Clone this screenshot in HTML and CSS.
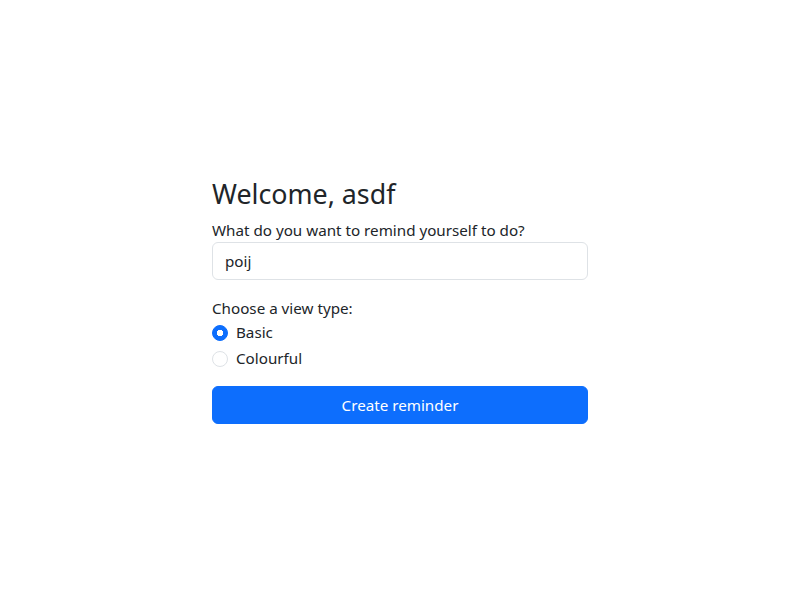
FILE: index.html
```html
<!DOCTYPE html>
<html lang="en">
<head>
<meta charset="utf-8">
<title>Reminder</title>
<link rel="stylesheet" href="styles.css">
</head>
<body>
<main class="page">
  <form class="card-form">
    <h3 class="title">Welcome, asdf</h3>
    <label class="label" for="task">What do you want to remind yourself to do?</label>
    <input class="control" id="task" type="text" value="poij">
    <div class="group">
      <div class="label">Choose a view type:</div>
      <div class="check">
        <input class="radio" type="radio" name="view" id="basic" checked>
        <label for="basic">Basic</label>
      </div>
      <div class="check">
        <input class="radio" type="radio" name="view" id="colourful">
        <label for="colourful">Colourful</label>
      </div>
    </div>
    <button class="btn" type="button">Create reminder</button>
  </form>
</main>
</body>
</html>
```
FILE: styles.css
```css
* { box-sizing: border-box; }
html, body { margin: 0; height: 100%; }
body {
  font-family: "Noto Sans", "Open Sans", sans-serif;
  font-size: 15.2px;
  line-height: 24px;
  color: #212529;
  background: #fff;
}
.page {
  height: 100%;
  display: flex;
  align-items: center;
  justify-content: center;
}
.card-form {
  width: 376px;
  display: flex;
  flex-direction: column;
}
.title {
  margin: 0 0 6px;
  font-size: 26.8px;
  font-weight: 400;
  line-height: 36px;
}
.label { display: block; }
.control {
  display: block;
  width: 100%;
  height: 38px;
  padding: 6px 12px;
  font: inherit;
  color: #212529;
  border: 1px solid #dee2e6;
  border-radius: 6px;
  outline: none;
}
.group { margin-top: 16px; }
.check {
  display: flex;
  align-items: center;
  min-height: 24px;
  margin-bottom: 2px;
}
.radio {
  appearance: none;
  -webkit-appearance: none;
  width: 16px;
  height: 16px;
  margin: 1px 8px 0 0;
  border: 1px solid #dee2e6;
  border-radius: 50%;
  background: #fff;
  flex: none;
}
.radio:checked {
  background: #0d6efd radial-gradient(circle, #fff 0 3px, transparent 3.5px);
  border-color: #0d6efd;
}
.btn {
  margin-top: 14px;
  height: 38px;
  width: 100%;
  font: inherit;
  color: #fff;
  background: #0d6efd;
  border: 1px solid #0d6efd;
  border-radius: 6px;
}
```
